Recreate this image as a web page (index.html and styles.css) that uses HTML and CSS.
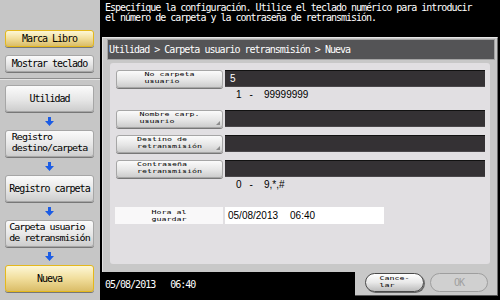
FILE: index.html
```html
<!DOCTYPE html>
<html lang="es">
<head>
  <meta charset="UTF-8" />
  <meta name="viewport" content="width=device-width, initial-scale=1.0" />
  <title>Carpeta usuario retransmisión - Nueva</title>
  <link rel="stylesheet" href="styles.css">
</head>
<body>
  <div class="screen">
    <aside class="sidebar">
      <div class="side-top">
        <button class="btn side-btn yellow">Marca Libro</button>
        <button class="btn side-btn">Mostrar teclado</button>
      </div>
      <div class="side-steps">
        <button class="btn step">Utilidad</button>
        <svg class="arrow" width="9" height="9" viewBox="0 0 9 9"><path d="M3 0h3v4h3L4.5 9 0 4h3z"/></svg>
        <button class="btn step"><span class="lines">Registro<br>destino/carpeta</span></button>
        <svg class="arrow" width="9" height="9" viewBox="0 0 9 9"><path d="M3 0h3v4h3L4.5 9 0 4h3z"/></svg>
        <button class="btn step">Registro carpeta</button>
        <svg class="arrow" width="9" height="9" viewBox="0 0 9 9"><path d="M3 0h3v4h3L4.5 9 0 4h3z"/></svg>
        <button class="btn step"><span class="lines">Carpeta usuario<br>de retransmisión</span></button>
        <svg class="arrow" width="9" height="9" viewBox="0 0 9 9"><path d="M3 0h3v4h3L4.5 9 0 4h3z"/></svg>
        <button class="btn step yellow">Nueva</button>
      </div>
    </aside>

    <main class="main">
      <p class="message">Especifique la configuración. Utilice el teclado numérico para introducir<br>el número de carpeta y la contraseña de retransmisión.</p>

      <div class="frame">
        <div class="crumbs">Utilidad &gt; Carpeta usuario retransmisión &gt; Nueva</div>
        <div class="panel">
          <div class="row">
            <button class="btn key"><span class="tiny">No carpeta<br>usuario</span></button>
            <div class="field">5</div>
          </div>
          <div class="range"><span>1</span><span class="dash">-</span><span class="to">99999999</span></div>

          <div class="row">
            <button class="btn key popup"><span class="tiny">Nombre carp.<br>usuario</span></button>
            <div class="field"></div>
          </div>
          <div class="row gap">
            <button class="btn key popup"><span class="tiny">Destino de<br>retransmisión</span></button>
            <div class="field"></div>
          </div>
          <div class="row gap">
            <button class="btn key"><span class="tiny">Contraseña<br>retransmisión</span></button>
            <div class="field"></div>
          </div>
          <div class="range tall"><span>0</span><span class="dash">-</span><span class="to">9,*,#</span></div>

          <div class="row">
            <div class="stamp"><span class="tiny center">Hora al<br>guardar</span></div>
            <div class="value"><span>05/08/2013</span><span class="time">06:40</span></div>
          </div>
        </div>
      </div>

      <div class="bottom">
        <div class="status"><span class="date">05/08/2013</span><span>06:40</span></div>
        <div class="actions">
          <button class="btn pill"><span class="tiny">Cance-<br>lar</span></button>
          <button class="btn pill off">OK</button>
        </div>
      </div>
    </main>
  </div>
</body>
</html>
```

FILE: styles.css
```css
* {
  box-sizing: border-box;
}
html, body {
  margin: 0;
}
body {
  width: 500px;
  height: 300px;
  overflow: hidden;
  background: #000;
  font-family: "DejaVu Sans Mono", monospace;
  font-size: 10px;
  letter-spacing: -1px;
  color: #000;
}
.screen {
  display: flex;
  height: 300px;
}

/* left column */
.sidebar {
  width: 100px;
  background: #c6c6c6;
  display: flex;
  flex-direction: column;
}
.side-top {
  height: 79px;
  border-bottom: 1px solid #8e8e8e;
  display: flex;
  flex-direction: column;
  gap: 8px;
  padding: 30px 0 0 5px;
}
.side-steps {
  flex: 1;
  border-top: 1px solid #e4e4e4;
  display: flex;
  flex-direction: column;
  align-items: center;
  padding: 5px 6px 0 5px;
}
.btn {
  font: inherit;
  letter-spacing: inherit;
  color: #000;
  padding: 0;
  border: 1px solid #a6a6a6;
  border-radius: 3px;
  background: linear-gradient(#fbfbfb, #e6e6e6 55%, #cdcdcd);
  box-shadow: 0 1px 0 #777;
  cursor: pointer;
}
.side-btn {
  width: 89px;
  height: 17px;
}
.step {
  width: 89px;
  height: 27px;
}
.yellow {
  border-color: #e4b81c;
  background: linear-gradient(#fdf7d6, #f1de9c 50%, #dabd68);
}
.lines {
  display: inline-block;
  text-align: left;
  line-height: 11.6px;
  transform: scaleY(0.86);
  margin: -2px 0;
}
.arrow {
  margin: 5px 0 4px;
  fill: #1c5ce4;
}

/* main area */
.main {
  flex: 1;
  margin-left: 2px;
  display: flex;
  flex-direction: column;
}
.message {
  margin: 0;
  height: 37px;
  padding: 3px 0 0 3px;
  color: #fff;
  line-height: 10px;
}
.frame {
  margin-right: 2px;
  background: #c8c8c8;
  border-top: 1px solid #e6e6e6;
  border-left: 1px solid #e0e0e0;
  border-right: 1px solid #6c6c6c;
  padding: 1px 2px 8px 4px;
}
.crumbs {
  height: 21px;
  background: #545456;
  border: 1px solid #a4a4a4;
  color: #fff;
  padding-left: 1px;
  line-height: 19px;
}
.panel {
  margin: 3px 5px 0 3px;
  height: 201px;
  background: #e1dfe2;
  border-radius: 3px;
  padding: 7px 5px 0 6px;
}
.row {
  display: flex;
  gap: 2px;
  height: 18px;
}
.row.gap {
  margin-top: 7px;
}
.key {
  position: relative;
  width: 107px;
  flex: none;
  height: 18px;
}
.popup::after {
  content: "";
  position: absolute;
  right: 2px;
  bottom: 2px;
  border-left: 4px solid transparent;
  border-bottom: 4px solid #8c8c8c;
}
.tiny {
  display: inline-block;
  font-size: 8.3px;
  letter-spacing: 0;
  line-height: 9.7px;
  text-align: left;
  transform: scaleY(0.66);
  margin: -3px 0;
}
.tiny.center {
  text-align: center;
}
.field {
  flex: 1;
  height: 17px;
  background: #343134;
  border-top: 1px solid #111;
  border-bottom: 1px solid #4a474a;
  color: #fff;
  font-family: "Liberation Sans", Arial, sans-serif;
  letter-spacing: 0;
  line-height: 15px;
  padding-left: 5px;
}
.range {
  height: 22px;
  padding: 1px 0 0 120px;
  font-family: "Liberation Sans", Arial, sans-serif;
  letter-spacing: 0;
  line-height: 11px;
}
.range.tall {
  height: 29px;
}
.dash {
  margin-left: 8px;
}
.to {
  margin-left: 11px;
}
.stamp {
  width: 108px;
  margin-left: -1px;
  height: 17px;
  background: #f9f8f9;
  display: flex;
  align-items: center;
  justify-content: center;
}
.value {
  width: 159px;
  height: 17px;
  background: #fff;
  font-family: "Liberation Sans", Arial, sans-serif;
  letter-spacing: 0;
  line-height: 17px;
  padding-left: 3px;
}
.time {
  margin-left: 12px;
}

/* bottom strip */
.bottom {
  flex: 1;
  display: flex;
}
.status {
  flex: 1;
  color: #fff;
  padding: 8px 0 0 3px;
  line-height: 10px;
}
.date {
  margin-right: 15px;
}
.actions {
  width: 143px;
  height: 24px;
  margin-right: 2px;
  background: #c8c8c8;
  border-right: 1px solid #6c6c6c;
  border-bottom: 1px solid #555;
  display: flex;
  gap: 6px;
  padding: 1px 0 0 10px;
}
.pill {
  width: 59px;
  height: 19px;
  border: 1px solid #4a4a4a;
  border-radius: 10px;
  background: linear-gradient(#fff, #e8e8e8 50%, #bcbcbc);
  box-shadow: 1px 1px 0 #666;
}
.pill.off {
  width: 58px;
  border-color: #9e9e9e;
  background: #d0d0d0;
  color: #a0a0a0;
  box-shadow: none;
}
```
